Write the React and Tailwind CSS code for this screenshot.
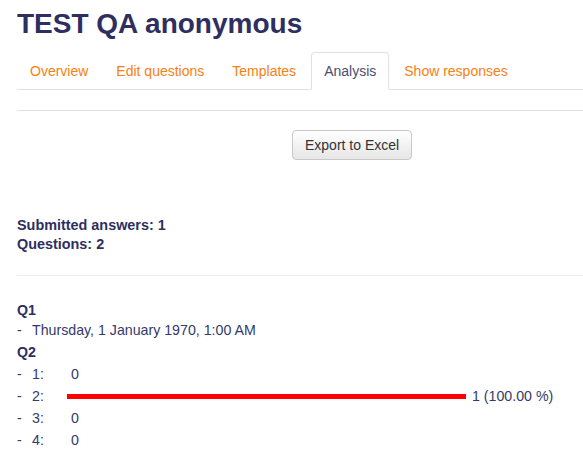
const tabs = ["Overview", "Edit questions", "Templates", "Analysis", "Show responses"];

const rows = [
  { label: "1:", value: "0" },
  { label: "2:", bar: 399, value: "1 (100.00 %)" },
  { label: "3:", value: "0" },
  { label: "4:", value: "0" },
];

export default function App() {
  return (
    <div
      className="min-h-screen bg-white pl-[17px] text-[#343a6b]"
      style={{ fontFamily: '"Liberation Sans", Arial, sans-serif' }}
    >
      <h1 className="pt-[6px] text-[28px] font-bold leading-[36px] text-[#2e2f5f]">TEST QA anonymous</h1>

      <ul className="mt-[10px] flex border-b border-[#dee2e6]">
        {tabs.map((tab) => (
          <li key={tab} className="mr-[2px] -mb-px">
            <span
              className={`block h-[38px] rounded-t-[4px] border px-[12px] pt-[10px] text-[14px] leading-[17px] ${
                tab === "Analysis"
                  ? "border-[#dee2e6] border-b-white bg-white text-[#4b4e6d]"
                  : "border-transparent text-[#f98012]"
              }`}
            >
              {tab}
            </span>
          </li>
        ))}
      </ul>

      <div className="mt-[20px] border-t border-[#dee2e6]" />

      <div className="pt-[19px] pl-[275px]">
        <button
          type="button"
          className="h-[30px] rounded-[4px] border border-[#c8c8c8] bg-gradient-to-b from-white to-[#e6e6e6] px-[12px] text-[14px] text-[#333]"
        >
          Export to Excel
        </button>
      </div>

      <div className="mt-[56px] text-[14.4px] font-bold leading-[19px] text-[#2e2f5f]">
        <p>Submitted answers: 1</p>
        <p>Questions: 2</p>
      </div>

      <div className="mt-[21px] border-t border-[#eeeeee]" />

      <div className="mt-[24px] text-[14.2px] leading-[22px]">
        <p className="font-bold leading-[20px] text-[#2e2f5f]">Q1</p>
        <p className="leading-[20px]">
          <span className="inline-block w-[15px]">-</span>Thursday, 1 January 1970, 1:00 AM
        </p>
        <p className="mt-[2px] font-bold leading-[21px] text-[#2e2f5f]">Q2</p>
        {rows.map((row) => (
          <div key={row.label} className="flex items-center">
            <span className="inline-block w-[15px]">-</span>
            <span className="w-[35px]">{row.label}</span>
            {row.bar ? (
              <>
                <span className="h-[5px] bg-[#ff0000]" style={{ width: row.bar }} />
                <span className="ml-[6px]">{row.value}</span>
              </>
            ) : (
              <span className="ml-[4px]">{row.value}</span>
            )}
          </div>
        ))}
      </div>
    </div>
  );
}
